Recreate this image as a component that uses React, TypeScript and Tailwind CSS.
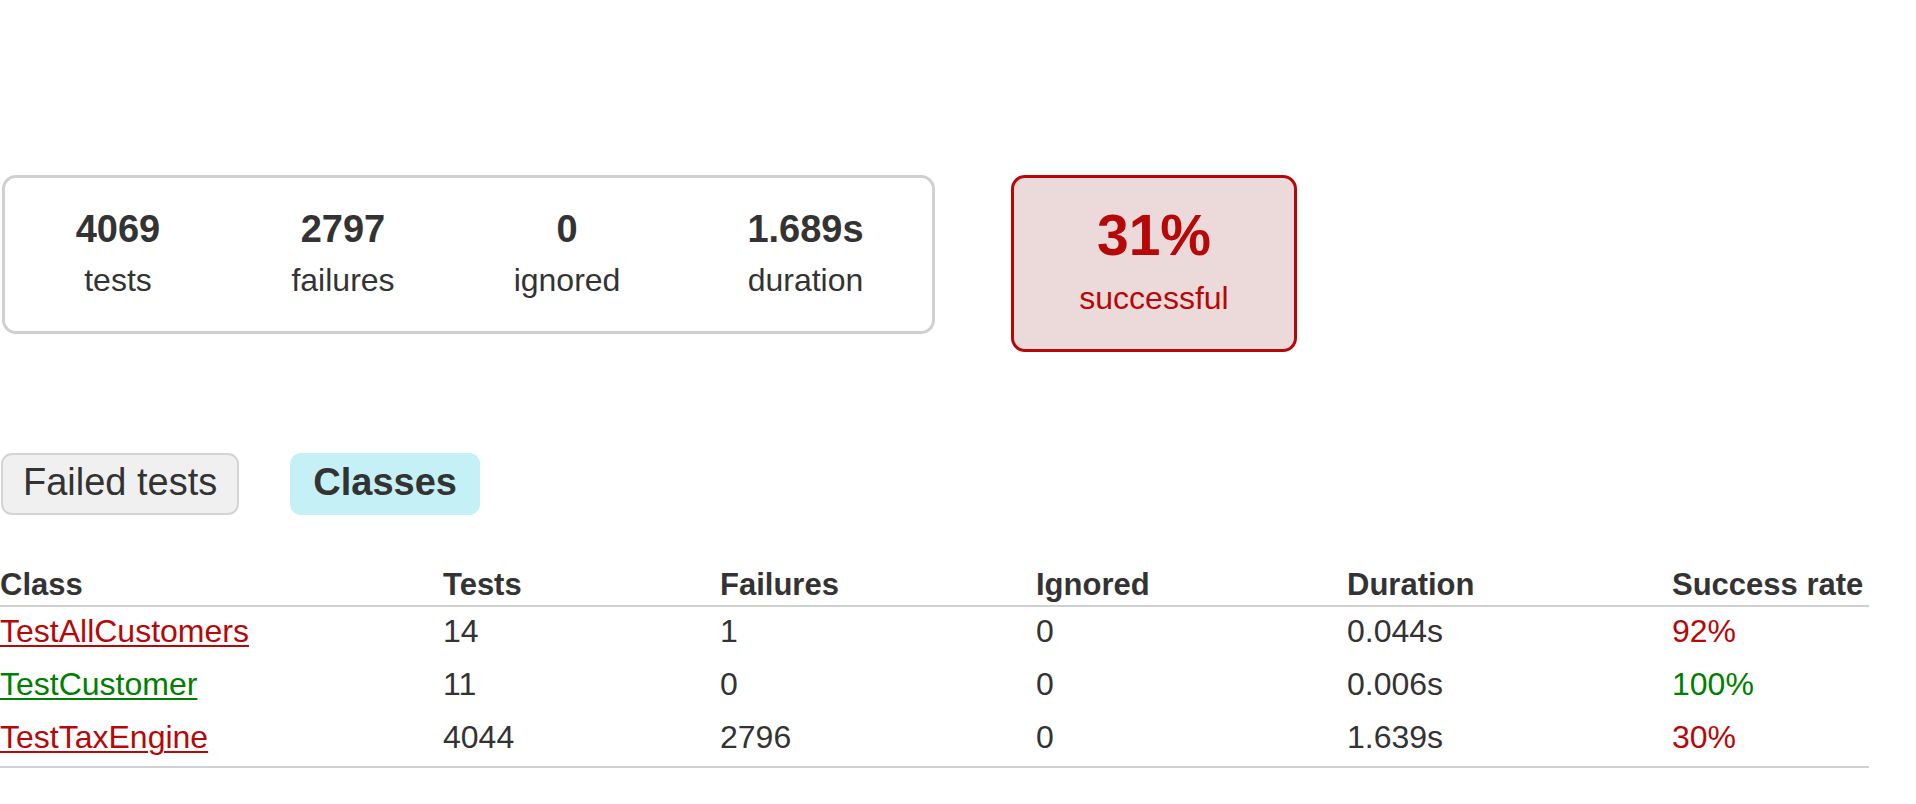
import React from 'react';

interface ClassRow {
  name: string;
  tests: number;
  failures: number;
  ignored: number;
  duration: string;
  rate: string;
  ok: boolean;
}

const rows: ClassRow[] = [
  { name: 'TestAllCustomers', tests: 14, failures: 1, ignored: 0, duration: '0.044s', rate: '92%', ok: false },
  { name: 'TestCustomer', tests: 11, failures: 0, ignored: 0, duration: '0.006s', rate: '100%', ok: true },
  { name: 'TestTaxEngine', tests: 4044, failures: 2796, ignored: 0, duration: '1.639s', rate: '30%', ok: false },
];

const counters = [
  { value: '4069', label: 'tests', width: 'w-[226px]' },
  { value: '2797', label: 'failures', width: 'w-[224px]' },
  { value: '0', label: 'ignored', width: 'w-[224px]' },
  { value: '1.689s', label: 'duration', width: 'w-[253px]' },
];

function Summary() {
  return (
    <div className="flex items-start pt-[175px]">
      <div className="ml-[2px] flex w-[933px] rounded-[14px] border-[3px] border-[#d0d0d0] pt-[29px] pb-[31px]">
        {counters.map((c) => (
          <div key={c.label} className={`${c.width} text-center`}>
            <div className="text-[38px] font-bold leading-[44px]">{c.value}</div>
            <div className="mt-[9px] text-[32px] leading-[40px]">{c.label}</div>
          </div>
        ))}
      </div>
      <div className="ml-[76px] w-[286px] rounded-[14px] border-[3px] border-[#b60808] bg-[#ecdada] pt-[25px] pb-[31px] text-center text-[#b60808]">
        <div className="text-[57px] font-bold leading-[64px]">31%</div>
        <div className="mt-[11px] text-[32px] leading-[40px]">successful</div>
      </div>
    </div>
  );
}

function Tabs() {
  return (
    <div className="mt-[101px] flex gap-[51px] pl-[1px]">
      <div className="flex h-[62px] items-center rounded-[11px] border-2 border-[#d4d4d4] bg-[#f0f0f0] px-[20px] pb-[3px] text-[38px]">
        Failed tests
      </div>
      <div className="flex h-[62px] items-center rounded-[11px] bg-[#c5f0f5] px-[23px] pb-[3px] text-[38px] font-bold">
        Classes
      </div>
    </div>
  );
}

function ClassesTable() {
  const th = 'p-0 pb-[3px] text-left text-[31px] font-bold leading-[35px] border-b-2 border-[#d0d0d0]';
  return (
    <table className="mt-[52px] w-[1869px] table-fixed border-collapse text-[32px]">
      <colgroup>
        <col className="w-[443px]" />
        <col className="w-[277px]" />
        <col className="w-[316px]" />
        <col className="w-[311px]" />
        <col className="w-[325px]" />
        <col className="w-[197px]" />
      </colgroup>
      <thead>
        <tr>
          <th className={th}>Class</th>
          <th className={th}>Tests</th>
          <th className={th}>Failures</th>
          <th className={th}>Ignored</th>
          <th className={th}>Duration</th>
          <th className={`${th} whitespace-nowrap`}>Success rate</th>
        </tr>
      </thead>
      <tbody>
        {rows.map((r, i) => {
          const last = i === rows.length - 1;
          const td = last
            ? 'p-0 pt-[7px] pb-[11px] leading-[35px] border-b-2 border-[#d0d0d0]'
            : 'p-0 pt-[7px] pb-[11px] leading-[35px]';
          const color = r.ok ? 'text-[#008000]' : 'text-[#b60808]';
          return (
            <tr key={r.name}>
              <td className={td}>
                <a href="#" className={`${color} underline decoration-[2px] underline-offset-[3px]`}>
                  {r.name}
                </a>
              </td>
              <td className={td}>{r.tests}</td>
              <td className={td}>{r.failures}</td>
              <td className={td}>{r.ignored}</td>
              <td className={td}>{r.duration}</td>
              <td className={`${td} ${color}`}>{r.rate}</td>
            </tr>
          );
        })}
      </tbody>
    </table>
  );
}

export default function App() {
  return (
    <div className="min-h-[804px] w-full bg-white font-['Liberation_Sans',Arial,sans-serif] text-[#333]">
      <Summary />
      <Tabs />
      <ClassesTable />
    </div>
  );
}
